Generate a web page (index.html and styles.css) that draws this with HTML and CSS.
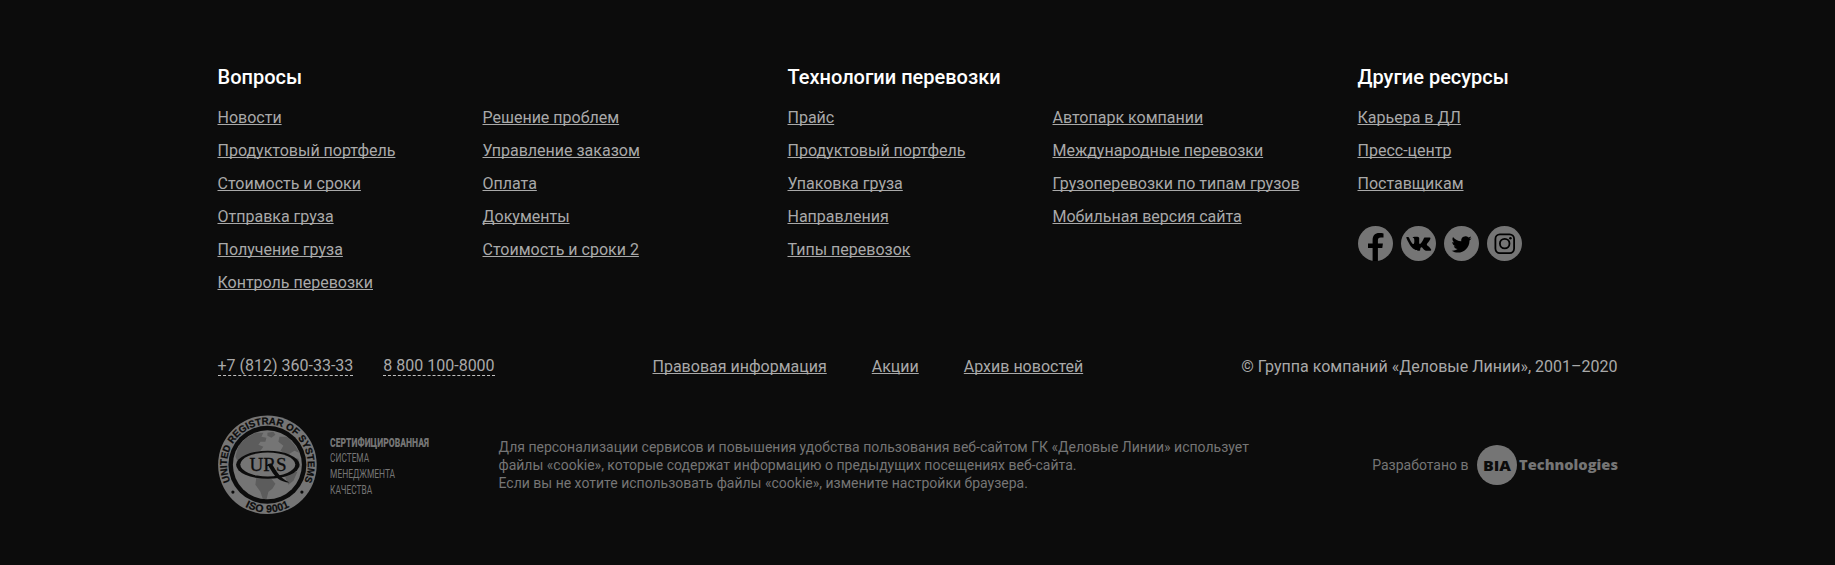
FILE: index.html
```html
<!DOCTYPE html>
<html lang="ru">
<head>
<meta charset="utf-8">
<title>Деловые Линии</title>
<link rel="stylesheet" href="styles.css">
</head>
<body>
<footer class="footer">
  <div class="container">
    <div class="menus">
      <section class="menu">
        <h3 class="menu-title">Вопросы</h3>
        <div class="menu-columns">
          <ul class="menu-list">
            <li><a href="#">Новости</a></li>
            <li><a href="#">Продуктовый портфель</a></li>
            <li><a href="#">Стоимость и сроки</a></li>
            <li><a href="#">Отправка груза</a></li>
            <li><a href="#">Получение груза</a></li>
            <li><a href="#">Контроль перевозки</a></li>
          </ul>
          <ul class="menu-list">
            <li><a href="#">Решение проблем</a></li>
            <li><a href="#">Управление заказом</a></li>
            <li><a href="#">Оплата</a></li>
            <li><a href="#">Документы</a></li>
            <li><a href="#">Стоимость и сроки 2</a></li>
          </ul>
        </div>
      </section>
      <section class="menu">
        <h3 class="menu-title">Технологии перевозки</h3>
        <div class="menu-columns">
          <ul class="menu-list">
            <li><a href="#">Прайс</a></li>
            <li><a href="#">Продуктовый портфель</a></li>
            <li><a href="#">Упаковка груза</a></li>
            <li><a href="#">Направления</a></li>
            <li><a href="#">Типы перевозок</a></li>
          </ul>
          <ul class="menu-list">
            <li><a href="#">Автопарк компании</a></li>
            <li><a href="#">Международные перевозки</a></li>
            <li><a href="#">Грузоперевозки по типам грузов</a></li>
            <li><a href="#">Мобильная версия сайта</a></li>
          </ul>
        </div>
      </section>
      <section class="menu">
        <h3 class="menu-title">Другие ресурсы</h3>
        <ul class="menu-list">
          <li><a href="#">Карьера в ДЛ</a></li>
          <li><a href="#">Пресс-центр</a></li>
          <li><a href="#">Поставщикам</a></li>
        </ul>
        <div class="social">
          <svg class="social-icon" viewBox="0 0 35 35"><circle class="disc" cx="17.5" cy="17.5" r="17.5"/><path d="M14.600 35V22H10v-4.600h4.600v-3.400c0-4.600 2.600-7 6.500-7 1.600 0 3.300.1 4.400.4v4.200h-2.600c-2.300 0-3 1.200-3 2.700v3.100h5l-.6 4.600h-4.400V35z"/></svg>
          <svg class="social-icon" viewBox="0 0 35 35"><circle class="disc" cx="17.5" cy="17.5" r="17.5"/><path d="M16.500 24.800h1.700s.5-.1.800-.4c.2-.2.200-.7.200-.7s0-2.200 1-2.500 2.200 2.100 3.600 3c1 .7 1.800.6 1.800.6l3.500-.1s1.800-.1.900-1.500c-.1-.1-.5-1-2.600-3-2.300-2-2-1.700.8-5.300 1.700-2.200 1.300-3 1.100-3.200-.4-.4-1.200-.3-1.200-.3h-3.800l-.8.1-.5.500s-.7 1.700-1.500 3.100c-1.800 2.900-2.500 3.100-2.800 2.900-.7-.4-.5-1.700-.5-2.700 0-2.900.4-4.100-.9-4.400-.4-.1-.7-.2-1.800-.2-1.400 0-2.500 0-3.200.3-.4.200-.8.700-.6.700.3 0 .9.200 1.200.6.400.6.400 1.800.4 1.800s.3 3.500-.6 3.900c-.6.300-1.400-.3-3.100-3.100-.9-1.500-1.500-3.100-1.500-3.100l-.4-.5-.8-.2H6.200c-.6 0-1.100.3-.8 1 0 0 2.600 6.300 5.600 9.500 2.700 2.900 5.500 2.800 5.500 2.800z"/></svg>
          <svg class="social-icon" viewBox="0 0 35 35"><circle class="disc" cx="17.5" cy="17.5" r="17.5"/><path d="M27.600 12.200c-.7.300-1.500.5-2.200.6.900-.5 1.500-1.200 1.700-2.200-.8.500-1.600.8-2.600 1a4.200 4.200 0 0 0-7.200 3.700c-3.300-.2-6.300-1.800-8.300-4.300-1.100 2-.5 4.200 1.200 5.400-.7 0-1.300-.2-1.900-.5 0 2.100 1.500 3.800 3.400 4.200-.6.200-1.200.2-1.900.1.500 1.600 2 2.800 3.800 2.800a8.500 8.500 0 0 1-6 1.700c7.900 4.900 17.900-.4 17.900-10.300.8-.6 1.500-1.300 2.100-2.200z"/></svg>
          <svg class="social-icon" viewBox="0 0 35 35"><circle class="disc" cx="17.5" cy="17.5" r="17.5"/><rect class="line" x="8.400" y="8.400" width="18.700" height="18.700" rx="4.500"/><circle class="line" cx="17.700" cy="17.600" r="4.800"/><circle cx="23.400" cy="12.200" r="1.300"/></svg>
        </div>
      </section>
    </div>

    <div class="contacts">
      <div class="phones"><a href="#">+7 (812) 360-33-33</a><a href="#">8 800 100-8000</a></div>
      <nav class="legal"><a href="#">Правовая информация</a><a href="#">Акции</a><a href="#">Архив новостей</a></nav>
      <div class="copyright">© Группа компаний «Деловые Линии», 2001–2020</div>
    </div>

    <div class="bottom">
      <svg class="certificate" viewBox="0.6 0.2 220 100">
        <defs>
          <path id="ring-top" d="M14.900 70.250A40.500 40.500 0 1 1 85.100 70.250"/>
          <path id="ring-bottom" d="M8.900 74A47.600 47.600 0 0 0 91.100 74"/>
          <clipPath id="globe"><circle cx="50" cy="50" r="34.500"/></clipPath>
        </defs>
        <circle class="disc" cx="50" cy="50" r="49.300"/>
        <circle class="dark" cx="50" cy="50" r="39"/>
        <circle class="disc" cx="50" cy="50" r="34.500"/>
        <g clip-path="url(#globe)" class="land">
          <path d="M18 42l3-11 8-8 9-5 8 0-2 4 5 1-1 4-5 0-2 3 5 2-3 4-6 1-3 5-5 2-2 4 5 3 2 4 4 3-5 0-7-4-5-6z"/>
          <path d="M39 62l7-1 8 3 4 5-3 5-4 3-2 8-3 1-3-9-5-7z"/>
          <path d="M50 18l6-1 2 3-4 3-4-2zM62 22l8 0 7 8 5 8-5-2-5 3 1 3 8 2 2 8-6 4-5-4-7 1-5-5 2-6 6-3-5-3 3-5-5-4z"/>
          <path d="M69 58l11-1-4 9-5 4-3-7z"/>
        </g>
        <ellipse class="dark" cx="50.400" cy="50" rx="31.700" ry="14"/>
        <ellipse class="disc" cx="50.400" cy="49.700" rx="27.500" ry="12"/>
        <path class="dark" d="M50 49.500l4-1c4 6 7.500 14.500 18 19.300-9.500-.5-14.500-6-18-11.800z"/>
        <text class="urs" x="50.700" y="56.200" textLength="37" lengthAdjust="spacingAndGlyphs">URS</text>
        <text class="ring-text"><textPath href="#ring-top" startOffset="50%" textLength="161" lengthAdjust="spacingAndGlyphs">UNITED REGISTRAR OF SYSTEMS</textPath></text>
        <text class="ring-text iso"><textPath href="#ring-bottom" startOffset="50%" textLength="46">ISO 9001</textPath></text>
        <circle class="dark" cx="15.500" cy="77.300" r="1.600"/>
        <circle class="dark" cx="84.500" cy="77.300" r="1.600"/>
        <g class="certificate-text">
          <text class="strong" x="112.700" y="32" textLength="98.800" lengthAdjust="spacingAndGlyphs">СЕРТИФИЦИРОВАННАЯ</text>
          <text x="112.700" y="46.800" textLength="39" lengthAdjust="spacingAndGlyphs">СИСТЕМА</text>
          <text x="112.700" y="63" textLength="65" lengthAdjust="spacingAndGlyphs">МЕНЕДЖМЕНТА</text>
          <text x="112.700" y="79" textLength="42" lengthAdjust="spacingAndGlyphs">КАЧЕСТВА</text>
        </g>
      </svg>
      <p class="cookie">Для персонализации сервисов и повышения удобства пользования веб-сайтом ГК «Деловые Линии» использует<br>файлы «cookie», которые содержат информацию о предыдущих посещениях веб-сайта.<br>Если вы не хотите использовать файлы «cookie», измените настройки браузера.</p>
      <div class="developer">
        <span>Разработано в</span>
        <svg class="bia" viewBox="0 0 141 40"><circle class="disc" cx="20" cy="20" r="20"/><text class="bia-mark" x="6" y="25.500" textLength="28" lengthAdjust="spacingAndGlyphs">BIA</text><text class="bia-name" x="42" y="25.300" textLength="99" lengthAdjust="spacingAndGlyphs">Technologies</text></svg>
      </div>
    </div>
  </div>
</footer>
</body>
</html>
```
FILE: styles.css
```css
* { box-sizing: border-box; }
body { margin: 0; background: #0c0c0c; }
.footer {
  height: 565px;
  padding-top: 65px;
  color: #a9a9a9;
  font: 16px/18px Roboto, sans-serif;
}
.container { width: 1400px; margin: 0 auto; }
a { color: inherit; text-decoration: underline; text-underline-offset: auto; text-decoration-skip-ink: none; }
.menus { display: grid; grid-template-columns: 570px 570px 260px; height: 287px; }
.menu-title { margin: 0 0 20px; color: #fff; font-size: 20px; line-height: 24px; font-weight: 500; }
.menu-columns { display: grid; grid-template-columns: 265px 1fr; }
.menu-list { display: flex; flex-direction: column; gap: 15px; margin: 0; padding: 0; list-style: none; white-space: nowrap; }
.social { display: flex; gap: 8px; margin-top: 33px; }
.social-icon { display: block; width: 35px; height: 35px; }
.disc { fill: #757575; }
.line { fill: none; stroke: #000; stroke-width: 1.8; }
.contacts { display: flex; justify-content: space-between; height: 63px; padding-top: 4px; white-space: nowrap; }
.phones { display: flex; align-items: flex-start; gap: 30px; width: 435px; }
.phones a { border-bottom: 1px dashed #c0c0c0; text-decoration: none; line-height: 19px; }
.legal { display: flex; flex: 1; gap: 45px; padding-top: 2px; }
.copyright { padding-top: 2px; }
.bottom { display: flex; align-items: center; height: 100px; color: #757575; font-size: 14px; white-space: nowrap; }
.certificate { flex: none; width: 220px; height: 100px; margin-right: 61px; overflow: visible; }
.cookie { flex: 1; margin: 0; }
.developer { display: flex; align-items: center; gap: 8px; }
.bia { display: block; width: 141px; height: 40px; overflow: visible; }
.dark { fill: #0c0c0c; }
.land { fill: #5c5c5c; }
.urs { fill: #0c0c0c; stroke: #0c0c0c; stroke-width: 0.3; font: 18.5px "Liberation Serif", serif; text-anchor: middle; }
.ring-text { fill: #0c0c0c; stroke: #0c0c0c; stroke-width: 0.25; font: bold 9.8px "Liberation Sans", sans-serif; text-anchor: middle; }
.iso { font-size: 10.5px; }
.certificate-text { fill: #757575; font: 400 13.5px Roboto, sans-serif; }
.strong { font-weight: 900; }
.bia-mark { fill: #0c0c0c; font: 800 14.5px "Open Sans", sans-serif; }
.bia-name { fill: #757575; font: 800 14px "Open Sans", sans-serif; }
```
